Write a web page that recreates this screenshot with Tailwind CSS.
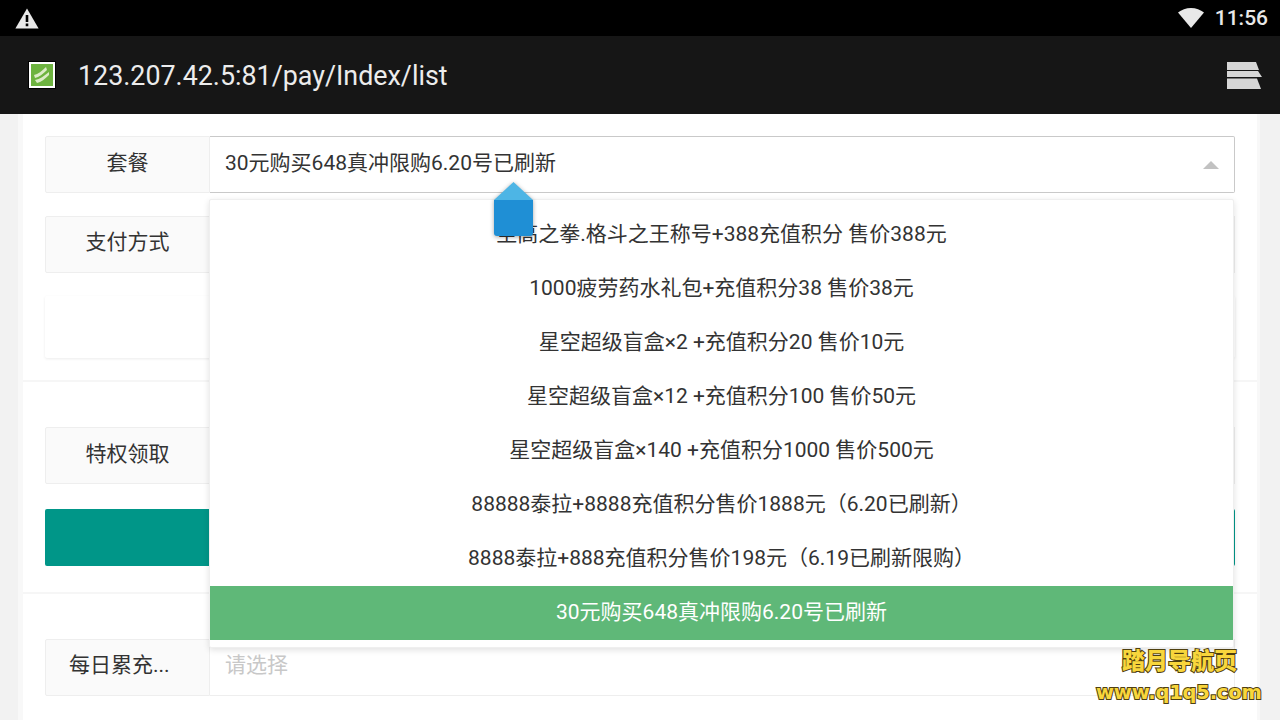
<!DOCTYPE html>
<html lang="zh-CN">
<head>
    <meta charset="UTF-8">
    <meta name="viewport" content="width=device-width, initial-scale=1.0">
    <title>套餐</title>
    <script src="https://cdn.jsdelivr.net/npm/@tailwindcss/browser@4"></script>
</head>
<body class="w-[1280px] h-[720px] overflow-hidden bg-[#f2f2f2] font-['Roboto','Noto_Sans_CJK_SC',sans-serif] text-[21px] text-[#333]">
    <!-- status bar -->
    <div class="h-[36px] bg-black flex items-center pl-[15px] pr-[12px] text-[#e8e8e8]">
        <svg class="w-[24px] h-[21px]" viewBox="0 0 24 21"><path fill="#e8e8e8" d="M12 0.5 L23.6 20.5 H0.4 Z"/><path fill="#000" d="M10.7 7 h2.6 v7 h-2.6z M10.7 15.5 h2.6 v2.700 h-2.6z"/></svg>
        <svg class="ml-auto w-[26px] h-[20px]" viewBox="0 0 26 20"><path fill="#e8e8e8" d="M13 20 L0 4.5 C3.5 1.8 8 0 13 0 C18 0 22.5 1.8 26 4.5 Z"/></svg>
        <span class="ml-[11px] text-[21px] font-medium leading-none">11:56</span>
    </div>
    <!-- app bar -->
    <div class="h-[78px] bg-[#161616] flex items-center pl-[28px] pr-[18px]">
        <svg class="w-[28px] h-[28px]" viewBox="0 0 28 28">
            <rect width="28" height="28" fill="#000"/>
            <rect x="1" y="1" width="26" height="26" fill="#fff"/>
            <rect x="3" y="3" width="22" height="22" fill="#6db33f"/>
            <path fill="#dcebc8" d="M6 14 C10 13 14 10 18 6 L19 9 C15 13 11 16 7 17 Z M7 19 C12 18 16 15 21 11 L21 14 C17 18 13 21 9 22 Z"/>
        </svg>
        <span class="ml-[22px] mt-[2px] text-[26.85px] leading-none text-[#ececec]">123.207.42.5:81/pay/Index/list</span>
        <svg class="ml-auto w-[36px] h-[28px]" viewBox="0 0 36 28">
            <path fill="#d6d6d6" d="M1 1 H30 L33 9 H1 Z"/>
            <path fill="#d6d6d6" d="M1 10 H32 L36 16 H1 Z"/>
            <path fill="#d6d6d6" d="M1 17.500 H31 L35 28 H1 Z"/>
        </svg>
    </div>

    <!-- page -->
    <div class="relative h-[606px] pl-[18px] pr-[20px] overflow-hidden">
        <div class="h-full bg-[#f8f8f8] px-[5px] pr-[3px]">
            <div class="h-full bg-white">
                <!-- first section -->
                <div class="h-[268px] px-[22px] pt-[22px] border-b-2 border-[#f6f6f6] flex flex-col">
                    <div class="flex h-[57px]">
                        <div class="w-[165px] bg-[#fafafa] border border-[#eeeeee] rounded-l-[2px] flex items-center justify-center pb-[2px]">套餐</div>
                        <div class="flex-1 border border-l-0 border-[#c9c9c9] rounded-r-[2px] flex items-center pl-[15px] pb-[2px]">
                            30元购买648真冲限购6.20号已刷新
                            <span class="ml-auto mr-[15px] mt-[2px] w-0 h-0 border-x-[8px] border-x-transparent border-b-[8px] border-b-[#c2c2c2]"></span>
                        </div>
                    </div>
                    <div class="flex h-[57px] mt-[23px]">
                        <div class="w-[165px] bg-[#fafafa] border border-[#eeeeee] rounded-l-[2px] flex items-center justify-center pb-[3px]">支付方式</div>
                        <div class="flex-1 border border-l-0 border-[#eeeeee]"></div>
                    </div>
                    <div class="h-[62px] mt-[23px] bg-white rounded-[2px] shadow-[0_1px_3px_rgba(0,0,0,0.08)]"></div>
                </div>
                <!-- second section -->
                <div class="h-[212px] px-[22px] pt-[45px] border-b-2 border-[#f6f6f6] flex flex-col">
                    <div class="flex h-[57px]">
                        <div class="w-[165px] bg-[#fafafa] border border-[#eeeeee] rounded-l-[2px] flex items-center justify-center pb-[2px]">特权领取</div>
                        <div class="flex-1 border border-l-0 border-[#eeeeee]"></div>
                    </div>
                    <div class="h-[57px] mt-[25px] bg-[#009688] rounded-[2px]"></div>
                </div>
                <!-- third section -->
                <div class="px-[22px] pt-[45px]">
                    <div class="flex h-[57px]">
                        <div class="w-[165px] bg-[#fafafa] border border-[#eeeeee] rounded-l-[2px] flex items-center pl-[23px] pb-[3px]">每日累充...</div>
                        <div class="flex-1 border border-l-0 border-[#eeeeee] flex items-center pl-[15px] pb-[3px] text-[#c8c8c8]">请选择</div>
                    </div>
                </div>
            </div>
        </div>

        <!-- open select menu -->
        <ul class="absolute left-[209px] top-[85px] w-[1025px] h-[449px] pt-[8px] bg-white border border-[#efefef] rounded-[2px] shadow-[0_2px_6px_rgba(0,0,0,0.12)] text-center">
            <li class="h-[54px] leading-[52px]">至高之拳.格斗之王称号+388充值积分 售价388元</li>
            <li class="h-[54px] leading-[52px]">1000疲劳药水礼包+充值积分38 售价38元</li>
            <li class="h-[54px] leading-[52px]">星空超级盲盒×2 +充值积分20 售价10元</li>
            <li class="h-[54px] leading-[52px]">星空超级盲盒×12 +充值积分100 售价50元</li>
            <li class="h-[54px] leading-[52px]">星空超级盲盒×140 +充值积分1000 售价500元</li>
            <li class="h-[54px] leading-[52px]">88888泰拉+8888充值积分售价1888元（6.20已刷新）</li>
            <li class="h-[54px] leading-[52px]">8888泰拉+888充值积分售价198元（6.19已刷新限购）</li>
            <li class="h-[54px] leading-[52px] bg-[#5fb878] text-white">30元购买648真冲限购6.20号已刷新</li>
        </ul>

        <!-- floating handle -->
        <svg class="absolute left-[490px] top-[66px] w-[48px] h-[62px] drop-shadow-[0_1px_2px_rgba(0,0,0,0.35)]" viewBox="0 0 48 62">
            <path fill="#4db5e5" d="M23.500 2 L43 20 V23 H4 V20 Z"/>
            <path fill="#1f8fd5" d="M4 20 H43 V53 Q43 56 40 56 H7 Q4 56 4 53 Z"/>
        </svg>
    </div>

    <!-- watermark -->
    <div class="absolute left-[1122px] top-[644px] font-['Noto_Sans_CJK_SC',sans-serif] font-black text-[23px] leading-[30px] text-[#f8d63c] [-webkit-text-stroke:2px_#4f4010] [paint-order:stroke_fill]">踏月导航页</div>
    <div class="absolute left-[1096px] top-[682px] font-['DejaVu_Sans',sans-serif] font-bold text-[19.5px] leading-[22px] tracking-[-0.2px] text-[#f8d63c] [-webkit-text-stroke:2px_#4f4010] [paint-order:stroke_fill]">www.q1q5.com</div>
</body>
</html>
